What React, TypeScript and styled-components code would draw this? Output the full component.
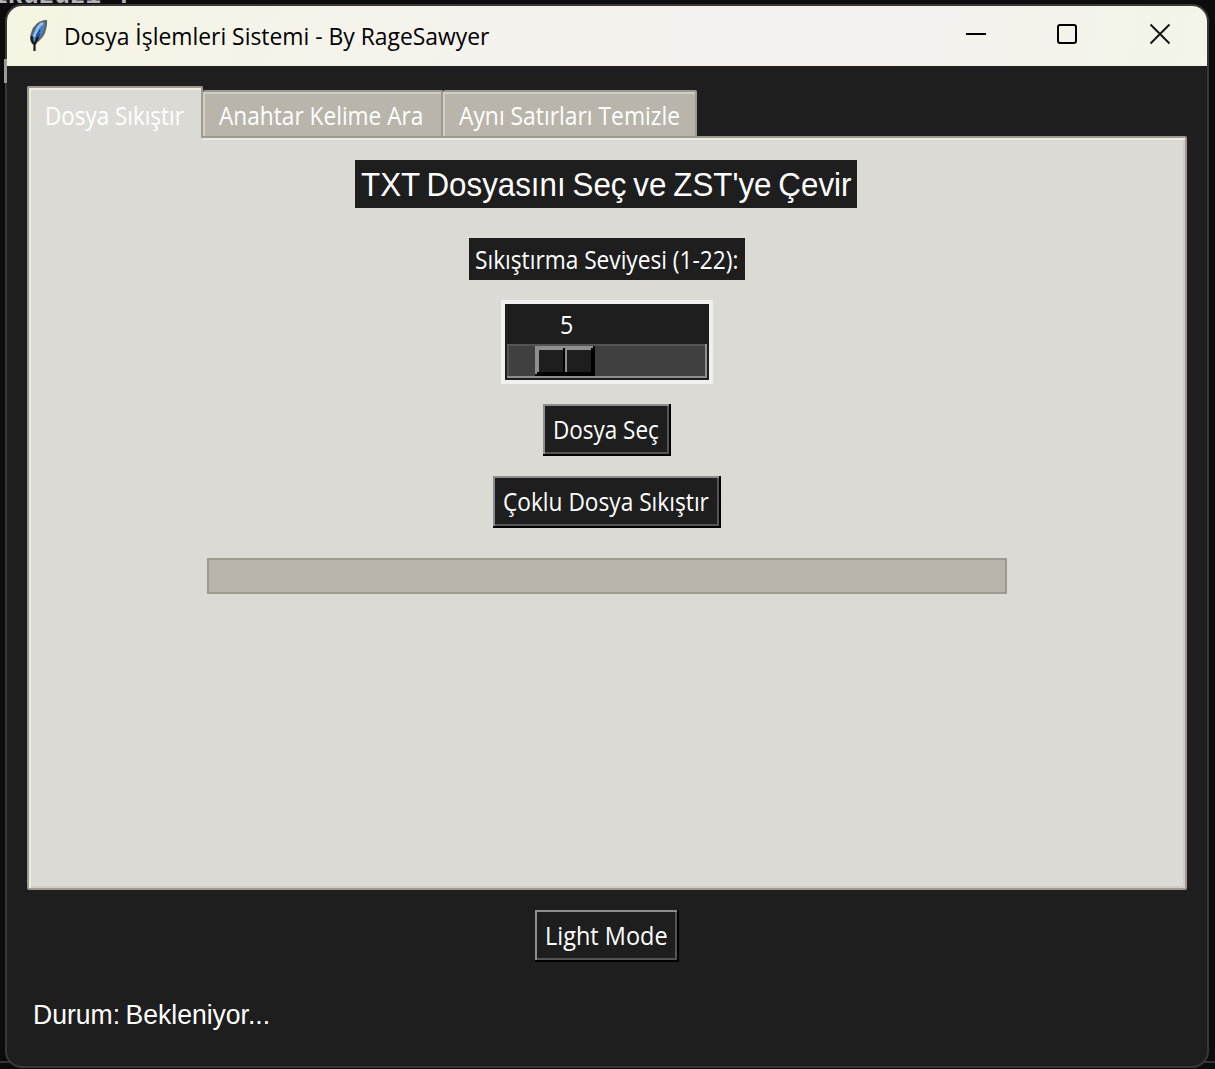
import React, { useLayoutEffect, useRef, useState } from "react";
import styled, { createGlobalStyle } from "styled-components";

const GlobalStyle = createGlobalStyle`
  *, *::before, *::after { box-sizing: border-box; }
  html, body { margin: 0; padding: 0; background: #0c0c0c; overflow: hidden; }
  button { font: inherit; color: inherit; border: 0; padding: 0; margin: 0; background: none; }
`;

const ui = `"Open Sans", "Noto Sans", sans-serif`;
const arial = `"Liberation Sans", Arial, sans-serif`;

const Desktop = styled.div`
  position: relative;
  width: 1215px;
  height: 1069px;
  padding: 4px 6px 1px 5px;
  background: #0c0c0c;
  overflow: hidden;
  font-family: ${ui};
`;

const Console = styled.div`
  position: absolute;
  left: -8px;
  top: -20px;
  font: bold 26px/32px "Liberation Mono", monospace;
  color: #b4b4b4;
  white-space: pre;
`;

const Caret = styled.div`
  position: absolute;
  z-index: 1;
  left: 4px;
  top: 59px;
  width: 3px;
  height: 24px;
  background: #9b9b9b;
`;

const Rule = styled.div`
  position: absolute;
  left: 0;
  right: 0;
  top: 1061px;
  height: 2px;
  background: #333;
`;

const Window = styled.main`
  position: relative;
  display: flex;
  flex-direction: column;
  width: 1204px;
  height: 1064px;
  border: 2px solid #383838;
  border-radius: 17px;
  background: #1e1e1e;
  overflow: hidden;
`;

const TitleBar = styled.header`
  display: flex;
  align-items: center;
  flex: none;
  height: 60px;
  padding-left: 21px;
  background: linear-gradient(100deg, #f5f5e3 0%, #f5f3ec 30%, #f5f1ef 70%, #f3f3ec 85%, #f3f5e8 100%);
  color: #000;
`;

const Title = styled.h1`
  flex: 1;
  margin: 0 0 1px 16px;
  font-size: 24px;
  font-weight: 400;
  line-height: 32px;
`;

const Controls = styled.div`
  display: flex;
  height: 60px;
  padding-right: 1px;
`;

const Control = styled.button`
  display: grid;
  place-items: center;
  width: 92px;
  height: 56px;
`;

const Body = styled.div`
  display: flex;
  flex-direction: column;
  align-items: center;
  flex: 1;
  padding: 20px 20px 0;
  color: #fff;
`;

const Notebook = styled.section`
  width: 1160px;
`;

const Tabs = styled.div`
  display: flex;
  align-items: flex-end;
  height: 50px;
`;

const Tab = styled.button<{ $w: number; $active?: boolean }>`
  position: relative;
  display: flex;
  align-items: flex-start;
  flex: none;
  width: ${(p) => p.$w}px;
  height: ${(p) => (p.$active ? 54 : 46)}px;
  margin-bottom: ${(p) => (p.$active ? -4 : 0)}px;
  z-index: ${(p) => (p.$active ? 1 : 0)};
  padding: ${(p) => (p.$active ? "11px 0 0 16px" : "7px 0 0 16px")};
  border-style: solid;
  border-color: #9e9a91;
  border-width: ${(p) => (p.$active ? "2px 2px 0 2px" : "2px 2px 0 0")};
  border-radius: 2px 2px 0 0;
  background: ${(p) => (p.$active ? "#dcdad5" : "#bab5ab")};
  box-shadow: inset 2px 2px 0 ${(p) => (p.$active ? "#eeebe7" : "#cfcdc8")};
  font-size: 25px;
  line-height: 32px;

  &::after {
    content: "";
    display: ${(p) => (p.$active ? "block" : "none")};
    position: absolute;
    right: -2px;
    bottom: 0;
    width: 2px;
    height: 2px;
    background: #dcdad5;
  }
`;

const Pane = styled.div`
  display: flex;
  flex-direction: column;
  align-items: center;
  height: 754px;
  padding-top: 22px;
  border: 2px solid #9e9a91;
  border-radius: 0 2px 2px 2px;
  background: #dcdad5;
  box-shadow: inset 2px 2px 0 #eeebe7, inset -2px -2px 0 #cfcdc8;
`;

const Caption = styled.div<{ $w: number; $h: number; $gap: number }>`
  display: flex;
  align-items: center;
  justify-content: center;
  width: ${(p) => p.$w}px;
  height: ${(p) => p.$h}px;
  margin-bottom: ${(p) => p.$gap}px;
  background: #1e1e1e;
  font-size: 25px;
  line-height: 34px;
`;

const Heading = styled(Caption)`
  margin-right: 2px;
  padding-left: 1px;
  font-family: ${arial};
  font-size: 34px;
  word-spacing: -2px;
`;

const Scale = styled.div`
  width: 212px;
  height: 84px;
  margin-bottom: 20px;
  padding: 0 2px 2px;
  border: 4px solid #f0f0f0;
  background: #1e1e1e;
`;

const ScaleValue = styled.div`
  height: 40px;
  padding: 3px 0 0 53px;
  font-size: 25px;
  line-height: 34px;
`;

const Trough = styled.div`
  height: 34px;
  padding: 2px 2px 2px 28px;
  background: #404040;
  box-shadow: inset -2px -2px 0 #8e8e8e, inset 2px 2px 0 #555;
`;

const Thumb = styled.div`
  display: flex;
  width: 60px;
  height: 30px;
  padding: 2px 4px 4px;
  background: #1e1e1e;
  box-shadow:
    inset -2px -2px 0 #000,
    inset 2px 2px 0 #8e8e8e,
    inset -4px -4px 0 #000,
    inset 4px 4px 0 #8e8e8e;

  &::before {
    content: "";
    width: 28px;
    border-right: 2px solid #8e8e8e;
    box-shadow: inset -2px 0 0 #000;
  }
`;

const PushButton = styled.button<{ $w: number; $gap?: number }>`
  display: flex;
  align-items: center;
  justify-content: center;
  flex: none;
  width: ${(p) => p.$w}px;
  height: 52px;
  margin-bottom: ${(p) => p.$gap ?? 0}px;
  padding-bottom: 2px;
  background: #1e1e1e;
  box-shadow:
    inset -2px -2px 0 #000,
    inset 2px 2px 0 #8e8e8e,
    inset -4px -4px 0 #555;
  color: #fff;
  font-size: 25px;
  line-height: 34px;
`;

const Progress = styled.div`
  width: 800px;
  height: 36px;
  border: 2px solid #9e9a91;
  background: #bab5ab;
`;

const ModeRow = styled.div`
  display: flex;
  justify-content: center;
  padding-top: 20px;
  height: 105px;
`;

const Status = styled.footer`
  align-self: flex-start;
  padding-left: 6px;
  font: 28px/40px ${arial};
  word-spacing: -2px;
`;

const FitBox = styled.span<{ $w: number }>`
  display: block;
  flex: none;
  width: ${(p) => p.$w}px;
  white-space: nowrap;
`;

const FitText = styled.span`
  display: inline-block;
  transform-origin: 0 50%;
`;

function Fit({ w, children }: { w: number; children: string }) {
  const ref = useRef<HTMLSpanElement>(null);
  const [k, setK] = useState(1);
  useLayoutEffect(() => {
    if (ref.current) setK((w - 2) / ref.current.offsetWidth);
  }, [w, children]);
  return (
    <FitBox $w={w}>
      <FitText ref={ref} style={{ transform: `scaleX(${k})` }}>{children}</FitText>
    </FitBox>
  );
}

function Feather() {
  return (
    <svg width="20" height="34" viewBox="0 0 20 34">
      <path d="M18 2C12 2 6 7 4 14c-1.500 4-1 8 1 10.500l2-1c5-3 9-8 10-13 .8-3 1.500-6 1-8.500z" fill="#4583c8" stroke="#62625a" strokeWidth="2" />
      <path d="M15 4c-4 2-6 6-7 10M8 13l-2 5" stroke="#8fc3f3" strokeWidth="2.6" fill="none" />
      <path d="M12 11 9 16l-1 5M12 15l-4 7" stroke="#1d4587" strokeWidth="1.5" fill="none" />
      <path d="M4 17c-.6 4 0 6 2.500 8v7M10 18l-3 7" stroke="#1b1b1b" strokeWidth="2.2" fill="none" />
    </svg>
  );
}

export default function App() {
  return (
    <Desktop>
      <GlobalStyle />
      <Console>ikuzuzı ?</Console>
      <Caret />
      <Rule />
      <Window>
        <TitleBar>
          <Feather />
          <Title><Fit w={427}>Dosya İşlemleri Sistemi - By RageSawyer</Fit></Title>
          <Controls>
            <Control aria-label="minimize">
              <svg width="22" height="22"><path d="M1 11h20" stroke="#000" strokeWidth="2" /></svg>
            </Control>
            <Control aria-label="maximize">
              <svg width="22" height="22"><rect x="1" y="2" width="18" height="18" rx="2" fill="none" stroke="#000" strokeWidth="2" /></svg>
            </Control>
            <Control aria-label="close">
              <svg width="22" height="22"><path d="M1.5 1.5l19 19M20.500 1.500l-19 19" stroke="#111" strokeWidth="1.9" /></svg>
            </Control>
          </Controls>
        </TitleBar>
        <Body>
          <Notebook>
            <Tabs>
              <Tab $w={176} $active><Fit w={141}>Dosya Sıkıştır</Fit></Tab>
              <Tab $w={240}><Fit w={206}>Anahtar Kelime Ara</Fit></Tab>
              <Tab $w={254}><Fit w={223}>Aynı Satırları Temizle</Fit></Tab>
            </Tabs>
            <Pane>
              <Heading $w={502} $h={48} $gap={30}>
                <Fit w={492}>TXT Dosyasını Seç ve ZST'ye Çevir</Fit>
              </Heading>
              <Caption $w={276} $h={42} $gap={20}><Fit w={265}>Sıkıştırma Seviyesi (1-22):</Fit></Caption>
              <Scale>
                <ScaleValue><Fit w={15}>5</Fit></ScaleValue>
                <Trough><Thumb /></Trough>
              </Scale>
              <PushButton $w={128} $gap={20}><Fit w={108}>Dosya Seç</Fit></PushButton>
              <PushButton $w={228} $gap={30}><Fit w={208}>Çoklu Dosya Sıkıştır</Fit></PushButton>
              <Progress />
            </Pane>
          </Notebook>
          <ModeRow>
            <PushButton $w={144}><Fit w={125}>Light Mode</Fit></PushButton>
          </ModeRow>
          <Status><Fit w={239}>Durum: Bekleniyor...</Fit></Status>
        </Body>
      </Window>
    </Desktop>
  );
}
